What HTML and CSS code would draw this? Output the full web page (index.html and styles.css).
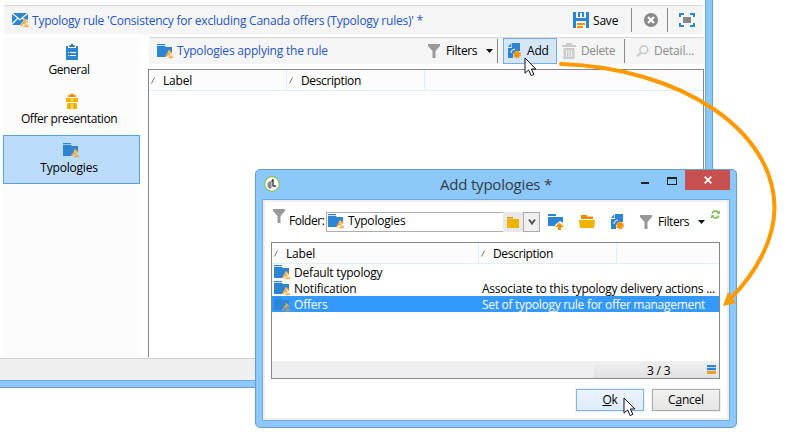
FILE: index.html
```html
<!DOCTYPE html>
<html lang="en">
<head>
<meta charset="utf-8">
<title>Typology rule</title>
<link rel="stylesheet" href="styles.css">
</head>
<body>
<svg class="defs" width="0" height="0">
  <defs>
    <symbol id="hammer" viewBox="0 0 9 9"><path d="M4 .5 7.500 4M3 3.500 5.500 6" stroke="#f39a20" stroke-width="1.400" fill="none"/><path d="M5 1.500 6.500 3 4.500 5 3 3.500z" fill="#f7b659"/><path d="M3.500 4.500.8 7.600" stroke="#f39a20" stroke-width="1.400"/><path d="M3.500 8.300H9M5 6.800h3" stroke="#f39a20" stroke-width="1.100"/></symbol>
    <symbol id="folder" viewBox="0 0 17 16"><path d="M0 1h8v1.300H0zM0 3h8l1 1h6v6l-3-2.500-4 6.500H0z" fill="#2c84d3"/><use href="#hammer" x="7.500" y="6.500" width="9" height="9"/></symbol>
    <symbol id="funnel" viewBox="0 0 12 14"><path d="M0 0h12v2L7.500 7v7H4.500V7L0 2z" fill="#999"/></symbol>
    <symbol id="doc" viewBox="0 0 13 16"><path d="M4 0h8v8H8L5 11v4H0V5h4z" fill="#2c84d3"/><path d="M3.300 0v4H0z" fill="#2c84d3"/><path d="M3 10q0-3 4-4" fill="none" stroke="#e3f0fb" stroke-width="1.200"/><circle cx="9" cy="11.500" r="2.900" fill="#f39200"/><circle cx="9" cy="11.500" r="3.300" fill="none" stroke="#f39200" stroke-width="1.400" stroke-dasharray="1.400 1.190"/></symbol>
    <symbol id="cursor" viewBox="0 0 13 20"><path d="M1 1v15.200l3.600-3.300 2.600 5.700 2.700-1.200-2.500-5.400h4.500z" fill="#fff" stroke="#111122" stroke-width="1"/></symbol>
  </defs>
</svg>

<main class="window">
  <div class="titlebar">
    <svg class="mail" width="17" height="16" viewBox="0 0 17 16"><path d="M1 1h14L8 7zM0 2l5 4-5 5zM16 2v6l-5-2zM0 13l6-6 2 1.500L10 7l2 1-4 5z" fill="#2c84d3"/><use href="#hammer" x="8" y="6.500" width="9" height="9"/></svg>
    <h1 class="title t-main">Typology rule 'Consistency for excluding Canada offers (Typology rules)' *</h1>
    <svg class="save-icon" width="16" height="16" viewBox="0 0 16 16"><path d="M0 0h3v6h10V0h3v16h-3V9H3v7H0zM5 0h6v5H9V1H7v4H5z" fill="#2c84d3"/><path d="M4 11h8v2H4zM4 14h6v2H4z" fill="#f39200"/></svg>
    <span class="save t-save">Save</span>
    <i class="sep"></i>
    <svg class="close-icon" width="14" height="14" viewBox="0 0 14 14"><circle cx="7" cy="7" r="7" fill="#888"/><path d="M4 4l6 6M10 4l-6 6" stroke="#fff" stroke-width="2.200"/></svg>
    <i class="sep"></i>
    <svg class="full-icon" width="16" height="14" viewBox="0 0 16 14"><path d="M1 4V1h4M11 1h4v3M15 10v3h-4M5 13H1v-3" fill="none" stroke="#2c84d3" stroke-width="2"/><path d="M4 4h8v6H4z" fill="#888"/></svg>
  </div>

  <div class="content">
    <nav class="side">
      <a class="tab"><svg width="12" height="16" viewBox="0 0 12 16"><path d="M0 2h2v2h8V2h2v14H0z" fill="#2c84d3"/><path d="M3 3V1.500h1.500L5 0h2l.5 1.500H9V3z" fill="#2c6fa9"/><path d="M2 8.500h1m1 0h6M2 11.500h1m1 0h6" stroke="#fff"/></svg><span class="t-general">General</span></a>
      <a class="tab offer"><svg width="12" height="16" viewBox="0 0 12 16"><path d="M0 5h5v4H0zM7 5h5v4H7zM1 10h4v6H1zM7 10h4v6H7z" fill="#f0b400"/><path d="M5 5h2v11H5z" fill="#f8d565"/><path d="M2 4V2h2l1-1.500h2L8 2h2v2z" fill="#f39200"/></svg><span class="t-offer">Offer presentation</span></a>
      <a class="tab on"><svg width="17" height="16"><use href="#folder"/></svg><span class="t-typ">Typologies</span></a>
    </nav>
    <section class="pane">
      <div class="bar">
        <svg class="bar-folder" width="17" height="16"><use href="#folder"/></svg>
        <h2 class="title t-apply">Typologies applying the rule</h2>
        <svg class="bar-funnel" width="12" height="14"><use href="#funnel"/></svg>
        <span class="bar-filters t-filters">Filters</span>
        <i class="caret"></i>
        <i class="sep"></i>
        <button class="add"><svg width="13" height="16"><use href="#doc"/></svg><span class="t-add">Add</span></button>
        <svg class="trash" width="14" height="16" viewBox="0 0 14 16"><path d="M0 2h4V0h6v2h4v2H0zM1.500 5h11v11h-11z" fill="#ccc"/><path d="M4.500 7v7M7 7v7M9.500 7v7" stroke="#f5f5f5"/></svg>
        <span class="off del t-del">Delete</span>
        <i class="sep"></i>
        <svg class="lens" width="13" height="12" viewBox="0 0 13 12"><circle cx="7.800" cy="4.800" r="3.900" fill="none" stroke="#ccc" stroke-width="1.700"/><path d="M5 7.500 1 11.300" stroke="#ccc" stroke-width="2"/></svg>
        <span class="off det t-det">Detail...</span>
      </div>
      <div class="list">
        <div class="head main-head">
          <div class="cell"><svg class="sort" width="4" height="7" viewBox="0 0 4 7"><path d="M.5 6.500 3.500.5" stroke="#777"/></svg><span class="t-label">Label</span></div>
          <div class="cell"><svg class="sort" width="4" height="7" viewBox="0 0 4 7"><path d="M.5 6.500 3.500.5" stroke="#777"/></svg><span class="t-desc">Description</span></div>
        </div>
      </div>
    </section>
  </div>
  <footer class="status"></footer>
</main>

<section class="dialog">
  <header class="dlg-title">
    <svg class="logo" width="16" height="16" viewBox="0 0 16 16"><circle cx="8" cy="8" r="7.300" fill="#fff" stroke="#8cc152" stroke-width="1.200"/><path d="M3.500 7 6 5l1.500 1v6L6 13l-2.500-2z" fill="#888"/><path d="M9 3v7.500M7.500 5.500 9 4M9 10h3" stroke="#333" stroke-width="1.300" fill="none"/></svg>
    <h2 class="t-dialog">Add typologies *</h2>
    <i class="min"></i><i class="max"></i>
    <button class="x"><svg width="8" height="8" viewBox="0 0 8 8"><path d="M.7.700l6.600 6.600M7.300.700.7 7.300" stroke="#fff" stroke-width="1.700"/></svg></button>
  </header>
  <div class="client">
    <div class="tools">
      <svg class="dlg-funnel" width="12" height="14"><use href="#funnel"/></svg>
      <label class="t-folder">Folder:</label>
      <div class="field"><svg width="17" height="16"><use href="#folder"/></svg><span class="t-field">Typologies</span></div>
      <button class="pick"><svg width="12" height="11" viewBox="0 0 12 11"><path d="M0 0h6v1.500H0z" fill="#e88b00"/><path d="M0 2h12v9H0z" fill="#f0b400"/></svg></button>
      <button class="drop"><svg width="8" height="8" viewBox="0 0 8 8"><path d="M1 1.500 4 5.500l3-4" fill="none" stroke="#555" stroke-width="2"/></svg></button>
      <svg class="up" width="16" height="16" viewBox="0 0 16 16"><path d="M0 0h8v2H0zM0 3h15v6l-3-2-5 4v1H0z" fill="#2c84d3"/><path d="M11.500 8.500 16 13h-3v3h-3v-3H7z" fill="#f39200"/></svg>
      <svg class="open" width="16" height="13" viewBox="0 0 16 13"><path d="M2 0h6v1.500h6V4H2z" fill="#e88b00"/><path d="M0 5h16l-1 8H1z" fill="#f0b400"/></svg>
      <svg class="new" width="13" height="16"><use href="#doc"/></svg>
      <svg class="tool-funnel" width="12" height="14"><use href="#funnel"/></svg>
      <span class="tool-filters t-filters">Filters</span>
      <i class="caret"></i>
      <svg class="refresh" width="9" height="9" viewBox="0 0 9 9"><path d="M1 3.500Q2 1 4.500 1 6.500 1 7.500 3M8 5.500Q7 8 4.500 8 2.500 8 1.500 6" fill="none" stroke="#6eb53f" stroke-width="1.300"/><path d="M8.800.5v3.300H5.500zM.2 8.500V5.200h3.300z" fill="#6eb53f"/></svg>
    </div>
    <div class="table">
      <div class="head dlg-head">
        <div class="cell"><svg class="sort" width="4" height="7" viewBox="0 0 4 7"><path d="M.5 6.500 3.500.5" stroke="#777"/></svg><span class="t-label">Label</span></div>
        <div class="cell"><svg class="sort" width="4" height="7" viewBox="0 0 4 7"><path d="M.5 6.500 3.500.5" stroke="#777"/></svg><span class="t-desc">Description</span></div>
      </div>
      <div class="row"><svg width="17" height="16"><use href="#folder"/></svg><span class="name t-default">Default typology</span></div>
      <div class="row"><svg width="17" height="16"><use href="#folder"/></svg><span class="name t-notif">Notification</span><span class="t-assoc">Associate to this typology delivery actions ...</span></div>
      <div class="row picked"><svg width="17" height="16"><use href="#folder"/></svg><span class="name t-offers">Offers</span><span class="t-set">Set of typology rule for offer management</span></div>
      <div class="space"></div>
      <div class="count"><div class="count-box"><span class="t-count">3 / 3</span><svg width="9" height="9" viewBox="0 0 9 9"><path d="M0 0h9v2H0zM0 3h9v2H0z" fill="#2c84d3"/><path d="M0 2h9v1H0zM0 5h9v1H0z" fill="#b9d7f0"/><path d="M0 6h9v3H0z" fill="#f0a020"/></svg></div></div>
    </div>
    <div class="actions"><button class="ok"><span class="t-ok"><u>O</u>k</span></button><button class="cancel"><span class="t-cancel">C<u>a</u>ncel</span></button></div>
  </div>
</section>

<svg class="arrow" width="812" height="436" viewBox="0 0 812 436"><path d="M561 64C680 68 774.500 130 774.500 208 774.500 240 755 274 731 298" fill="none" stroke="#ff9900" stroke-width="4" stroke-linecap="round"/><path d="M723 306 728 292 736 303z" fill="#ff9900"/></svg>
<svg class="cursor one" width="13" height="20"><use href="#cursor"/></svg>
<svg class="cursor two" width="13" height="20"><use href="#cursor"/></svg>
</body>
</html>
```

FILE: styles.css
```css
* { box-sizing: border-box; }
body { margin: 0; width: 812px; height: 436px; position: relative; overflow: hidden; background: #fff; color: #000; font: 12px/16px "Open Sans", "Noto Sans", sans-serif; letter-spacing: -0.2px; }
svg { display: block; flex: none; }
h1, h2 { margin: 0; font-size: 12px; font-weight: 400; }
button { font: inherit; letter-spacing: inherit; color: inherit; padding: 0; margin: 0; border: 0; }
span, label, h1, h2 { white-space: nowrap; }
i { flex: none; display: block; }
.defs { position: absolute; }

.window { position: absolute; left: 0; top: 0; width: 713px; height: 388px; background: #fff; border-right: 1px solid #6b9cc7; border-bottom: 1px solid #6b9cc7; box-shadow: inset -6px -6px #8dc8fa, inset -7px -7px #6faadc; padding: 5px 7px 7px 0; display: flex; flex-direction: column; }
.titlebar { margin: 0 2px 0 4px; height: 29px; flex: none; border-top: 1px solid #d9d9d9; background: #f5f5f5; display: flex; align-items: center; padding-left: 8px; }
.mail { margin-right: 3px; }
.title { color: #2456c4; flex: none; }
.titlebar .title { width: 541px; padding-top: 1px; letter-spacing: -0.23px; }
.save-icon { margin-right: 4px; }
.save { width: 38px; padding-top: 1px; }
.sep { width: 1px; height: 24px; background: #888; }
.close-icon { margin: 0 9px 0 12px; }
.full-icon { margin-left: 11px; }

.content { display: flex; flex: 1; padding: 3px 1px 0 3px; }
.side { width: 137px; height: 320px; background: #fcfcfc; margin-right: 8px; }
.tab { display: flex; flex-direction: column; align-items: center; height: 49px; padding-top: 6px; border: 1px solid transparent; }
.tab span { margin-top: 2px; margin-right: 5px; }
.t-general { letter-spacing: -0.45px; }
.t-offer { letter-spacing: -0.42px; }
.tab.on { background: #bbdcfb; border-color: #5b9fe0; }
.pane { flex: 1; }
.bar { height: 27px; margin: 0 0 5px 1px; border-top: 1px solid #d9d9d9; background: #f5f5f5; display: flex; align-items: center; padding-left: 8px; }
.bar-folder { margin-right: 3px; }
.bar .title { width: 251px; }
.bar-funnel { margin-right: 6px; }
.bar-filters { width: 40px; }
.t-filters { letter-spacing: -0.4px; }
.caret { width: 7px; height: 4px; background: #111; clip-path: polygon(0 0, 100% 0, 50% 100%); }
.bar .caret { margin-right: 4px; }
.add { display: flex; align-items: center; width: 54px; height: 26px; margin-left: 5px; padding-left: 4px; border: 1px solid #73aeea; background: #d5e7f7; }
.add span { margin-left: 6px; }
.trash { margin: 0 5px 0 5px; }
.off { color: #8b8b8b; }
.del { width: 43px; letter-spacing: -0.35px; }
.lens { margin: 0 5px 0 11px; }
.list { height: 288px; border: 1px solid #828790; border-bottom: 0; }
.head { display: flex; background: #fcfcfc; border-bottom: 1px solid #e1eefb; }
.main-head { height: 21px; }
.cell { width: 138px; border-right: 1px solid #e1eefb; display: flex; align-items: center; padding-left: 2px; }
.cell span { padding-top: 2px; }
.t-desc { letter-spacing: -0.38px; }
.sort { margin-right: 8px; }
.status { height: 22px; flex: none; margin-right: -1px; border-top: 1px solid #d2d2d2; background: #efefef; }

.dialog { position: absolute; left: 255px; top: 169px; width: 482px; height: 259px; background: #8dc8fa; border: 1px solid #6b9cc7; border-radius: 5px; padding: 0 6px 6px; display: flex; flex-direction: column; }
.dlg-title { height: 29px; display: flex; align-items: flex-start; flex: none; }
.logo { margin: 6px 0 0 2px; }
.dlg-title h2 { font-size: 15px; line-height: 20px; margin: 4px 0 0 160px; width: 201px; color: #333c48; }
.min { width: 8px; height: 2px; margin: 12px 18px 0 0; background: #222; }
.max { width: 10px; height: 8px; margin: 7px 8px 0 0; border: 1px solid #222; border-top-width: 2px; }
.x { width: 45px; height: 20px; margin-left: auto; background: #c75050; display: flex; align-items: center; justify-content: center; }
.client { flex: 1; border: 1px solid #6faadc; background: #fff; box-shadow: inset 0 0 0 2px #f0efed; padding: 9px 9px 0 8px; }
.tools { display: flex; height: 33px; align-items: flex-start; }
.dlg-funnel { margin: 0 4px 0 2px; }
.tools label { width: 37px; margin-top: 4px; letter-spacing: -0.45px; }
.field { width: 177px; height: 20px; margin-top: 3px; border: 1px solid #abadb3; border-right: 0; display: flex; align-items: flex-start; padding-left: 1px; }
.field span { margin: 0 0 0 3px; }
.pick { width: 20px; height: 20px; margin-top: 3px; padding-left: 4px; background: #e8e8e8; }
.drop { width: 17px; height: 20px; margin-top: 3px; padding-left: 4px; background: #efefef; border: 1px solid #aaa; }
.up { margin: 5px 0 0 8px; }
.open { margin: 6px 0 0 15px; }
.new { margin: 5px 0 0 16px; }
.tool-funnel { margin: 6px 0 0 16px; }
.tool-filters { margin: 5px 0 0 6px; width: 40px; }
.tools .caret { margin-top: 11px; }
.refresh { margin: 1px 0 0 6px; }
.table { height: 137px; border: 1px solid #828790; display: flex; flex-direction: column; }
.dlg-head { height: 21px; flex: none; }
.dlg-head .cell:first-child { width: 207px; }
.row { display: flex; height: 16px; flex: none; padding-left: 2px; line-height: 17px; }
.name { margin-left: 3px; width: 188px; }
.t-assoc { letter-spacing: -0.24px; }
.t-set { letter-spacing: -0.29px; }
.picked { background: #3399ff; color: #fff; }
.picked svg { opacity: .85; }
.space { flex: 1; }
.count { height: 17px; background: #efefef; display: flex; justify-content: flex-end; }
.count-box { width: 125px; background: linear-gradient(#f0f0f0, #e2e2e2); display: flex; align-items: center; padding-left: 53px; }
.count-box span { width: 60px; padding-top: 2px; }
.actions { display: flex; gap: 8px; justify-content: flex-end; margin-top: 10px; }
.actions button { width: 68px; height: 22px; border: 1px solid #acacac; background: linear-gradient(#f1f1f1, #e5e5e5); box-shadow: 0 0 0 1px #f0f0f0; }
.actions .ok { border-color: #7eb4ea; background: linear-gradient(#ecf4fc, #dcecfc); }

.arrow { position: absolute; left: 0; top: 0; pointer-events: none; }
.cursor { position: absolute; }
.one { left: 524px; top: 57px; }
.two { left: 623px; top: 397px; }
```
